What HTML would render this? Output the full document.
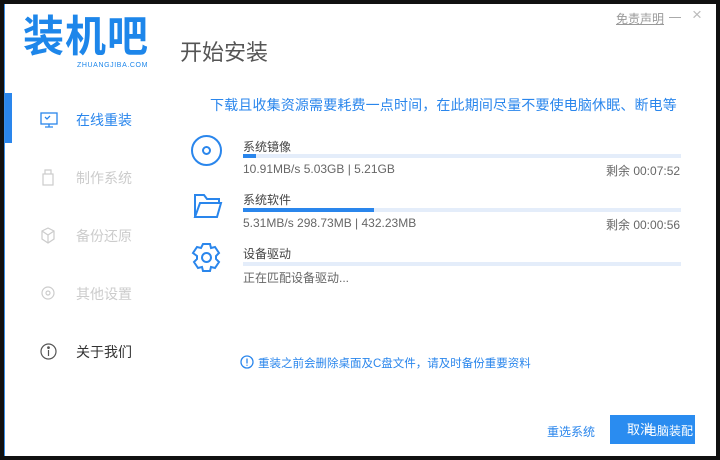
<!DOCTYPE html>
<html><head><meta charset="utf-8"><style>
*{margin:0;padding:0;box-sizing:border-box}
body{width:720px;height:460px;background:#111;position:relative;overflow:hidden;font-family:"Liberation Sans","Noto Sans CJK SC",sans-serif}
.win{position:absolute;left:4px;top:4px;width:712px;height:452px;background:#fff;border-left:1px solid #3a8ee6}
.a{position:absolute;white-space:nowrap}
.bar{position:absolute;left:243px;width:438px;height:4px;background:#e4edfa}
.bar i{display:block;height:4px;background:#2a86ec}
.nav{position:absolute;left:76px;font-size:14px;color:#ccc}
.sm{font-size:12px;color:#666}
</style></head><body>
<div class="win"></div>
<div class="a" style="left:5px;top:93px;width:7px;height:50px;background:#2a86ec"></div>
<div class="a" style="left:23px;top:14px;font-size:41px;font-weight:bold;color:#1d86ea;letter-spacing:1px;line-height:46px;transform:scaleY(1.05)">装机吧</div>
<div class="a" style="left:77px;top:62px;font-size:7px;color:#1d86ea;letter-spacing:0.6px">ZHUANGJIBA.COM</div>
<div class="a" style="left:180px;top:35px;font-size:22px;color:#555">开始安装</div>
<div class="a" style="left:616px;top:10px;font-size:12px;color:#999;text-decoration:underline">免责声明</div>
<div class="a" style="left:669px;top:17px;width:12px;height:1px;background:#aaa"></div>
<div class="a" style="left:692px;top:5px;font-size:17px;color:#bbb">×</div>

<svg class="a" style="left:39px;top:111px" width="20" height="18" viewBox="0 0 20 18" fill="none" stroke="#2a86ec" stroke-width="1.3"><rect x="2" y="2" width="16" height="11"/><path d="M10 13v3M6 16h8M6 6l2 2 3-3"/></svg>
<div class="nav" style="top:110px;color:#2a86ec">在线重装</div>
<svg class="a" style="left:41px;top:168px" width="14" height="18" fill="none" stroke="#ccc" stroke-width="1.2"><rect x="2" y="6" width="10" height="11"/><path d="M4 6V2h6v4"/></svg>
<div class="nav" style="top:168px">制作系统</div>
<svg class="a" style="left:40px;top:227px" width="16" height="17" fill="none" stroke="#ccc" stroke-width="1.2"><path d="M8 1l6 3v8l-6 4-6-4V4z M8 8v8M2 4l6 4 6-4"/></svg>
<div class="nav" style="top:226px">备份还原</div>
<svg class="a" style="left:40px;top:285px" width="16" height="16" fill="none" stroke="#ccc" stroke-width="1.2"><circle cx="8" cy="8" r="6"/><circle cx="8" cy="8" r="2"/></svg>
<div class="nav" style="top:284px">其他设置</div>
<svg class="a" style="left:40px;top:343px" width="17" height="17" fill="none" stroke="#555" stroke-width="1.2"><circle cx="8.5" cy="8.5" r="7.5"/><path d="M8.5 7v6"/><circle cx="8.5" cy="4.6" r=".8" fill="#555"/></svg>
<div class="nav" style="top:342px;color:#333">关于我们</div>

<div class="a" style="left:210px;top:95px;font-size:14px;color:#2a86ec;letter-spacing:0.15px">下载且收集资源需要耗费一点时间，在此期间尽量不要使电脑休眠、断电等</div>

<svg class="a" style="left:190px;top:134px" width="33" height="33" fill="none" stroke="#2a86ec" stroke-width="2"><circle cx="16.5" cy="16.5" r="14.5"/><circle cx="16.5" cy="16.5" r="3.5"/></svg>
<div class="a sm" style="left:243px;top:138px;color:#444">系统镜像</div>
<div class="bar" style="top:154px"><i style="width:13px"></i></div>
<div class="a sm" style="left:243px;top:162px">10.91MB/s 5.03GB | 5.21GB</div>
<div class="a sm" style="left:606px;top:162px">剩余 00:07:52</div>

<svg class="a" style="left:193px;top:193px" width="30" height="26" fill="none" stroke="#2a86ec" stroke-width="2"><path d="M2 24V2h9l3 4h12v4M2 24h22l4-14H7z"/></svg>
<div class="a sm" style="left:243px;top:191px;color:#444">系统软件</div>
<div class="bar" style="top:208px"><i style="width:131px"></i></div>
<div class="a sm" style="left:243px;top:216px">5.31MB/s 298.73MB | 432.23MB</div>
<div class="a sm" style="left:606px;top:216px">剩余 00:00:56</div>

<svg class="a" style="left:191px;top:242px" width="31" height="31" viewBox="0 0 31 31" fill="none" stroke="#2a86ec" stroke-width="2"><path d="M12 2h7l1 4 4-1 4 6-3 3v3l3 3-4 6-4-1-1 4h-7l-1-4-4 1-4-6 3-3v-3L2 11l4-6 4 1z"/><circle cx="15.5" cy="15.5" r="4.5"/></svg>
<div class="a sm" style="left:243px;top:245px;color:#444">设备驱动</div>
<div class="bar" style="top:262px"></div>
<div class="a sm" style="left:243px;top:269px">正在匹配设备驱动...</div>

<svg class="a" style="left:240px;top:355px" width="14" height="14" fill="none" stroke="#2a86ec" stroke-width="1.3"><circle cx="7" cy="7" r="6"/><path d="M7 3.5v5M7 9.8v1"/></svg>
<div class="a" style="left:258px;top:355px;font-size:11.5px;color:#2a86ec">重装之前会删除桌面及C盘文件，请及时备份重要资料</div>

<div class="a" style="left:547px;top:423px;font-size:12px;color:#2a86ec">重选系统</div>
<div class="a" style="left:610px;top:415px;width:85px;height:29px;background:#2a8cf0;color:#fff;font-size:13px;line-height:29px;padding-left:17px">取消</div>
<div class="a" style="left:645px;top:422px;font-size:12px;color:#fff">电脑装配</div>
</body></html>
